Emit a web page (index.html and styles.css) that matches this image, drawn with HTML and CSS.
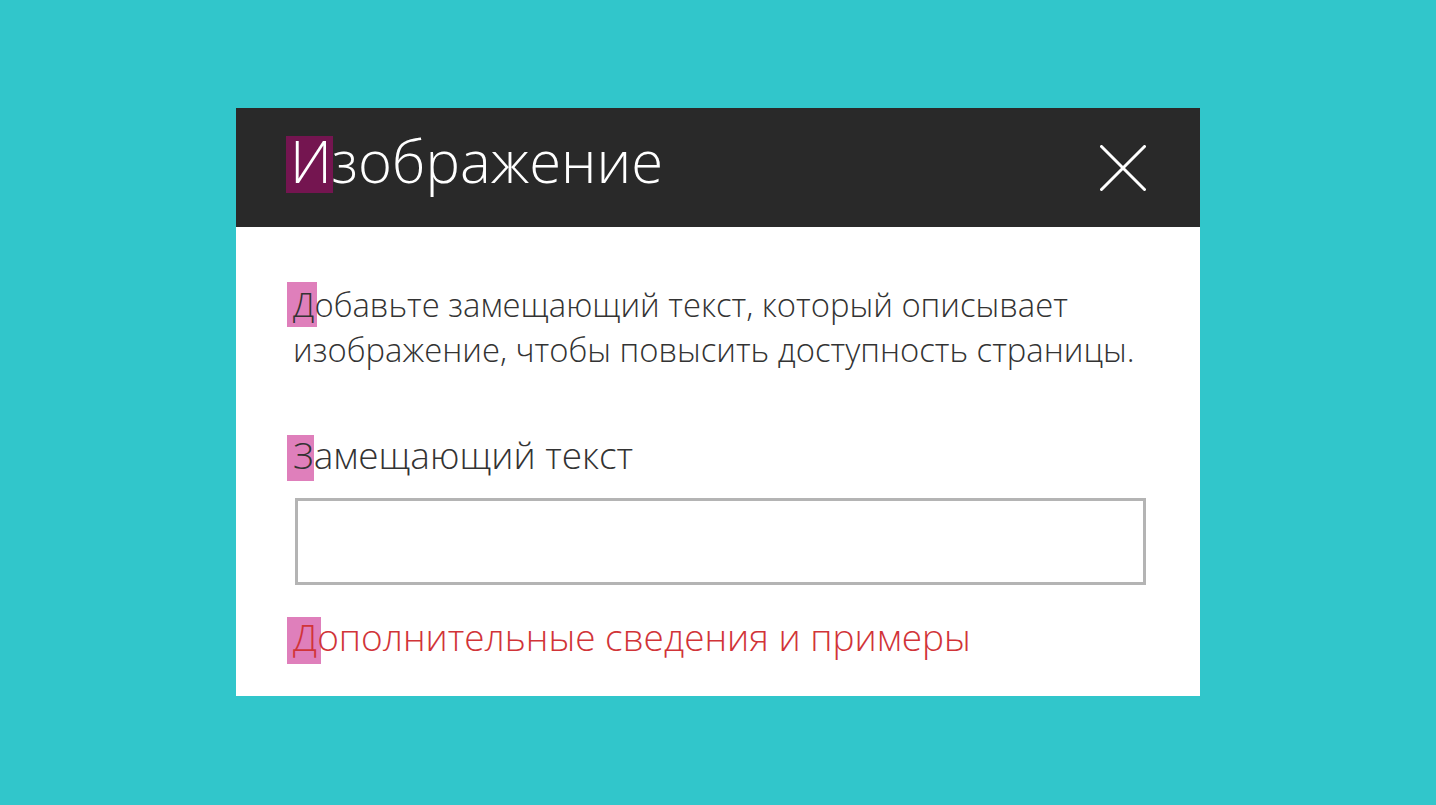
FILE: index.html
```html
<!DOCTYPE html>
<html lang="ru">
<head>
<meta charset="utf-8">
<title>Изображение</title>
<link rel="stylesheet" href="styles.css">
</head>
<body>
<div class="dialog">
  <div class="header">
    <h1 class="title"><span class="hl hl-dark">И</span>зображение</h1>
    <button class="close" aria-label="Закрыть">
      <svg width="46" height="46" viewBox="0 0 46 46"><path d="M1.5 1.5 L44.5 44.5 M44.5 1.5 L1.5 44.5" stroke="#fff" stroke-width="3" stroke-linecap="round"/></svg>
    </button>
  </div>
  <div class="content">
    <p class="desc"><span class="hl hl-d">Д</span>обавьте замещающий текст, который описывает<br>изображение, чтобы повысить доступность страницы.</p>
    <label class="label"><span class="hl hl-z">З</span>амещающий текст</label>
    <div class="input"></div>
    <a class="link" href="#"><span class="hl hl-l">Д</span>ополнительные сведения и примеры</a>
  </div>
</div>
</body>
</html>
```

FILE: styles.css
```css
html, body {
  margin: 0;
  padding: 0;
}
body {
  background: #31c6cb;
  height: 805px;
  padding: 108px 0 0 236px;
  box-sizing: border-box;
  font-family: "Open Sans", "Noto Sans", sans-serif;
  font-weight: 300;
}
.dialog {
  width: 964px;
  height: 588px;
  background: #ffffff;
  display: flex;
  flex-direction: column;
  overflow: hidden;
}
.header {
  flex: 0 0 119px;
  height: 119px;
  background: #292929;
  display: flex;
  align-items: center;
  justify-content: space-between;
  padding: 0 54px 0 54px;
  box-sizing: border-box;
}
.title {
  margin: 0 0 14px 0;
  font-size: 58px;
  font-weight: 300;
  color: #ffffff;
  line-height: 1;
  isolation: isolate;
}
.close {
  background: none;
  border: 0;
  padding: 0;
  width: 46px;
  height: 46px;
  display: flex;
}
.content {
  display: flex;
  flex-direction: column;
  align-items: flex-start;
  padding: 55px 10px 0 57px;
}
.desc {
  margin: 0;
  font-size: 32.8px;
  font-weight: 350;
  line-height: 45px;
  color: #333333;
  white-space: nowrap;
  isolation: isolate;
}
.label {
  margin-top: 61px;
  font-size: 37px;
  font-weight: 350;
  line-height: 44px;
  color: #333333;
  isolation: isolate;
}
.input {
  margin-top: 21px;
  margin-left: 2px;
  width: 851px;
  height: 87px;
  border: 3px solid #b4b4b4;
  box-sizing: border-box;
}
.link {
  margin-top: 29px;
  font-size: 37px;
  font-weight: 350;
  line-height: 46px;
  color: #d13438;
  text-decoration: none;
  isolation: isolate;
}
.hl {
  position: relative;
}
.hl::before {
  content: "";
  position: absolute;
  z-index: -1;
  background: #df7fbb;
}
.hl-dark::before {
  background: #741550;
  left: -4px;
  width: 47px;
  top: 15px;
  bottom: 7px;
}
.hl-d::before {
  left: -6px;
  width: 30px;
  top: 0;
  bottom: 0;
}
.hl-z::before {
  left: -6px;
  width: 27px;
  top: 6px;
  bottom: -1px;
}
.hl-l::before {
  left: -6px;
  width: 34px;
  top: 6px;
  bottom: -2px;
}
```
